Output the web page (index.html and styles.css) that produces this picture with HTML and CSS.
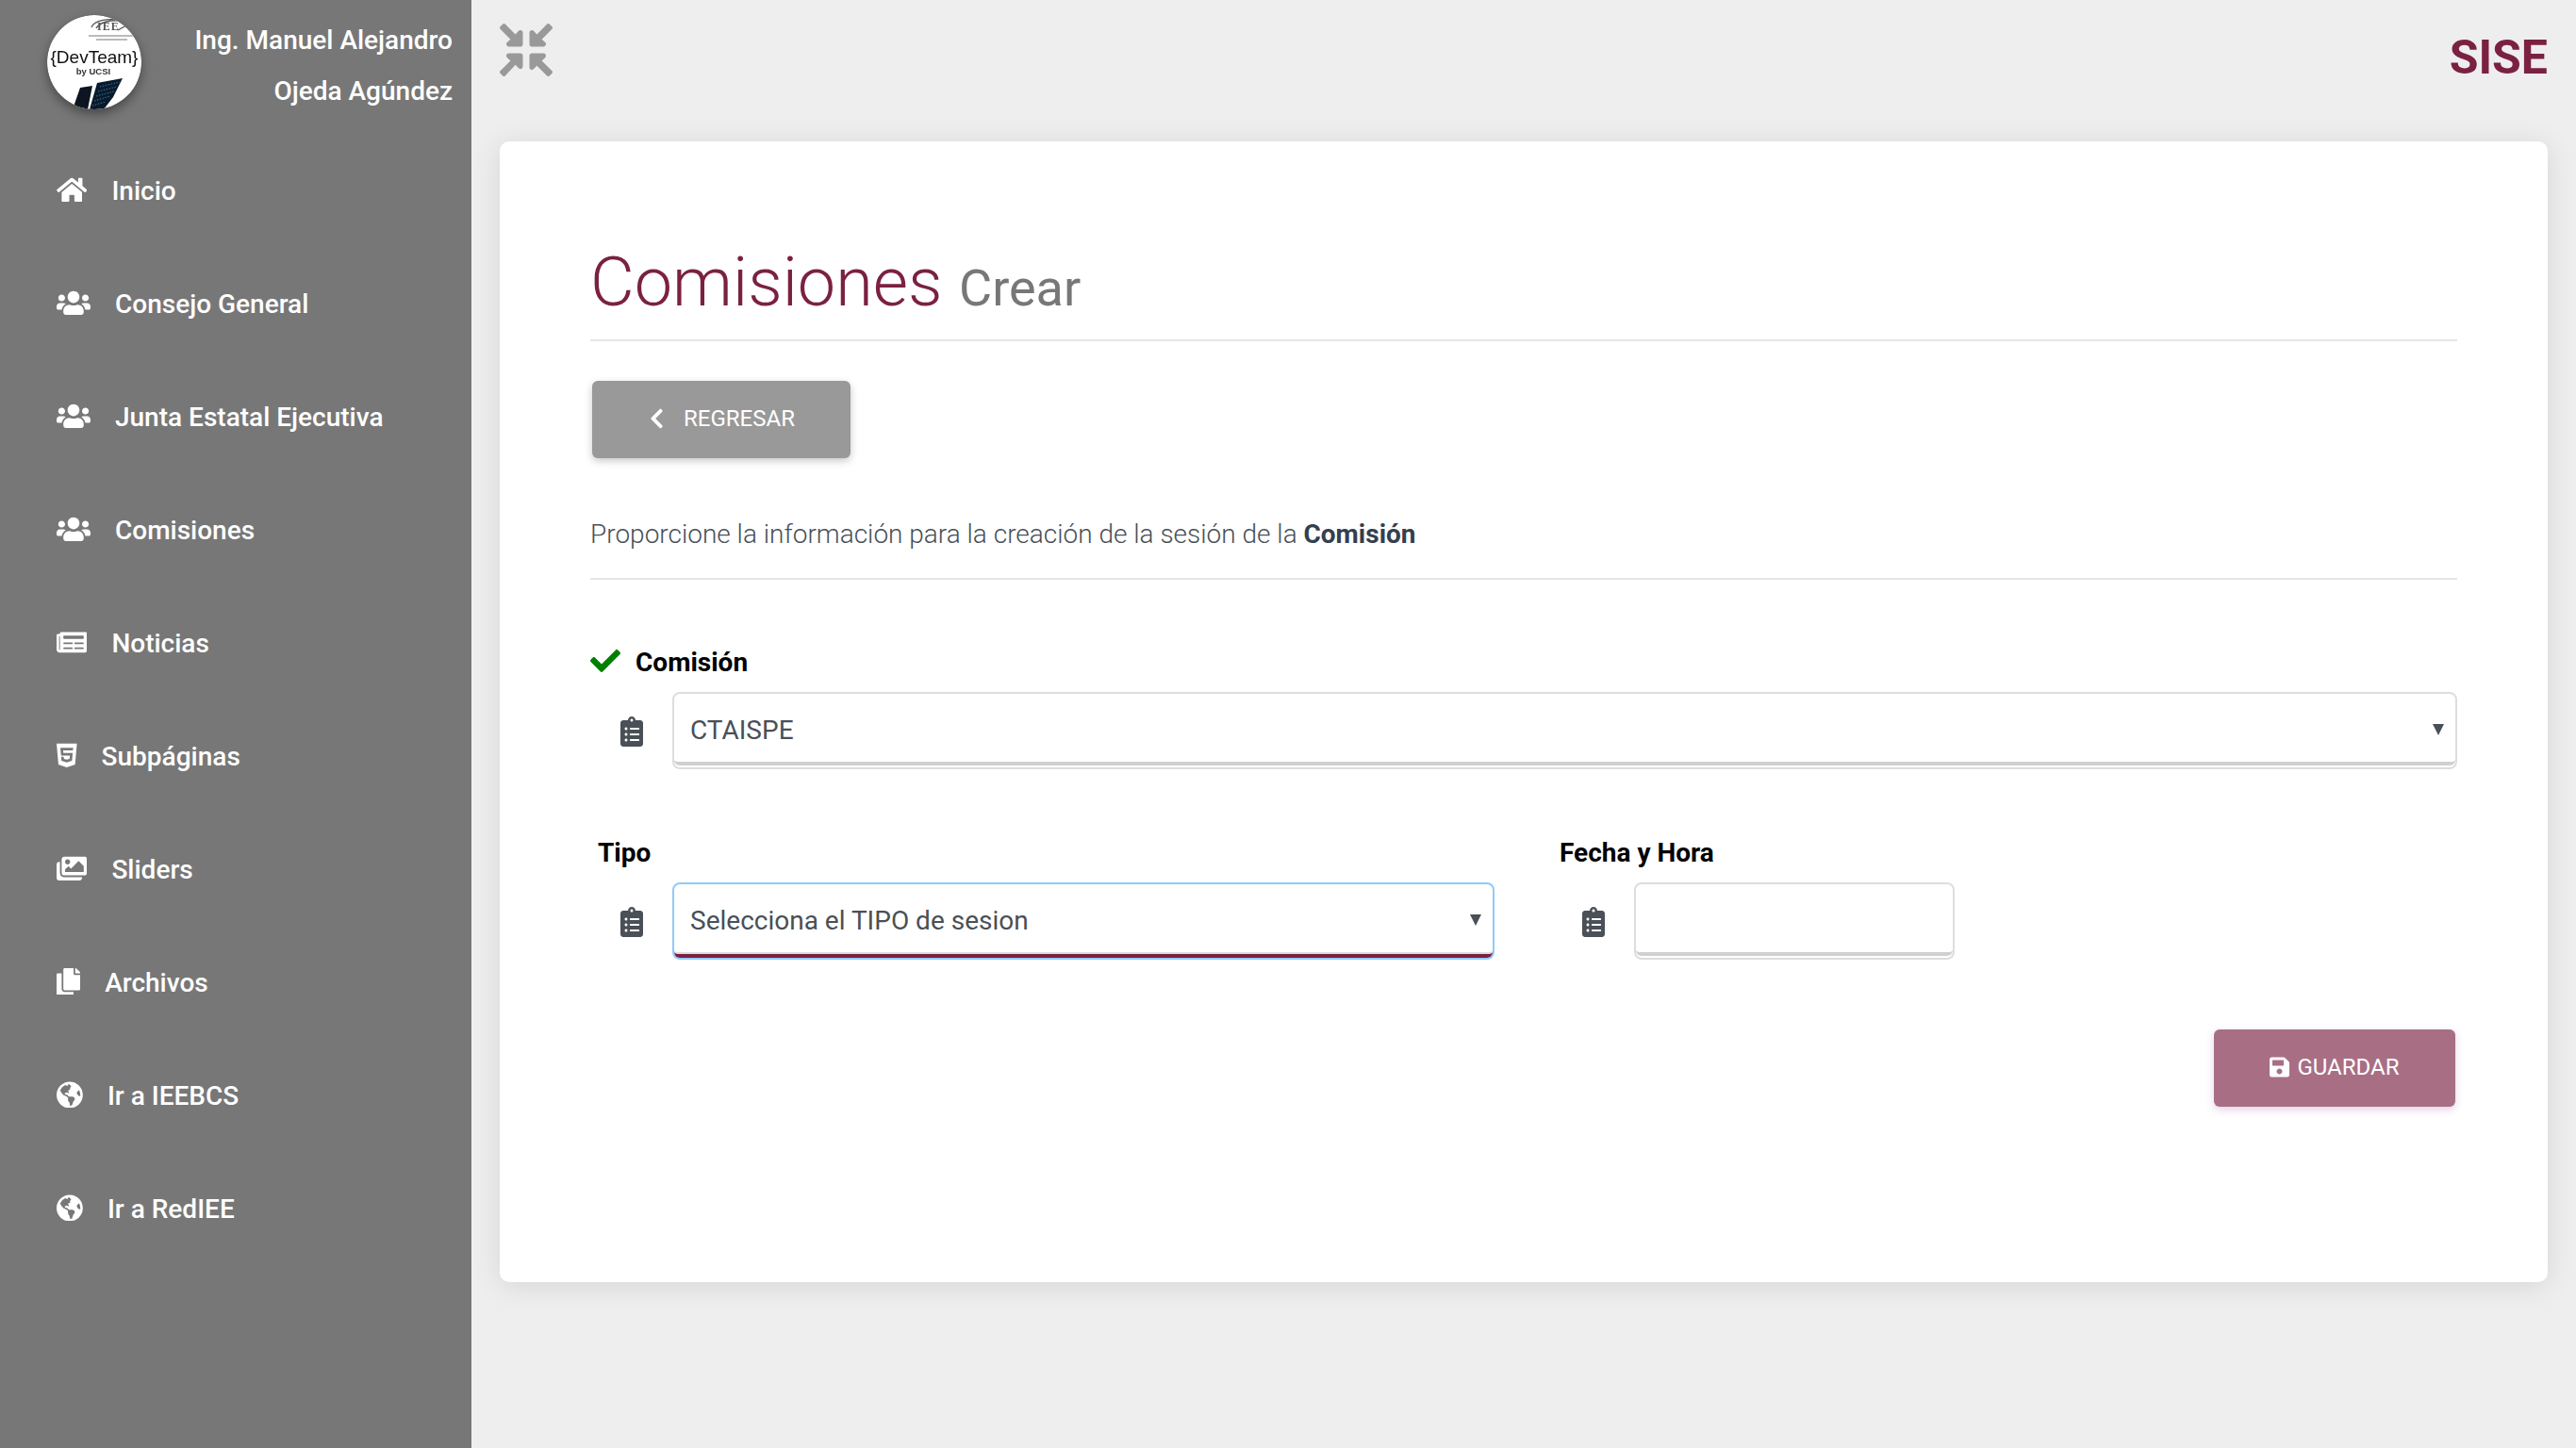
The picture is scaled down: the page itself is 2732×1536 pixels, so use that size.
FILE: index.html
```html
<!DOCTYPE html>
<html lang="es">
<head>
<meta charset="utf-8">
<title>SISE - Comisiones</title>
<link rel="stylesheet" href="styles.css">
</head>
<body>
<svg class="defs" width="0" height="0" aria-hidden="true">
  <symbol id="i-users" viewBox="0 0 640 512"><path d="M96 224c35.3 0 64-28.7 64-64s-28.7-64-64-64-64 28.7-64 64 28.7 64 64 64zm448 0c35.3 0 64-28.7 64-64s-28.7-64-64-64-64 28.7-64 64 28.7 64 64 64zm32 32h-64c-17.6 0-33.5 7.1-45.1 18.6 40.3 22.1 68.9 62 75.1 109.4h66c17.7 0 32-14.3 32-32v-32c0-35.3-28.7-64-64-64zm-256 0c61.9 0 112-50.1 112-112S381.9 32 320 32 208 82.1 208 144s50.1 112 112 112zm76.8 32h-8.3c-20.8 10-43.9 16-68.5 16s-47.6-6-68.5-16h-8.3C179.6 288 128 339.6 128 403.2V432c0 26.5 21.5 48 48 48h288c26.5 0 48-21.5 48-48v-28.8c0-63.6-51.6-115.2-115.2-115.2zm-223.7-13.4C161.5 263.1 145.6 256 128 256H64c-35.3 0-64 28.7-64 64v32c0 17.7 14.3 32 32 32h65.9c6.3-47.4 34.9-87.3 75.2-109.4z"/></symbol>
  <symbol id="i-globe" viewBox="0 0 496 512"><path d="M248 8C111.03 8 0 119.03 0 256s111.03 248 248 248 248-111.03 248-248S384.97 8 248 8zm82.29 357.6c-3.9 3.88-7.99 7.95-11.31 11.28-2.99 3-5.1 6.7-6.17 10.71-1.51 5.66-2.73 11.38-4.77 16.87l-17.39 46.85c-13.76 3-28 4.69-42.65 4.69v-27.38c1.69-12.62-7.64-36.26-22.63-51.25-6-6-9.37-14.14-9.37-22.63v-32.01c0-11.64-6.27-22.34-16.46-27.97-14.37-7.95-34.81-19.06-48.81-26.11-11.48-5.78-22.1-13.14-31.65-21.75l-.8-.72a114.792 114.792 0 0 1-18.06-20.74c-9.38-13.77-24.66-36.42-34.59-51.14 20.47-45.5 57.36-82.04 103.2-101.89l24.01 12.01C203.48 89.74 216 82.01 216 70.11v-11.3c7.99-1.29 16.12-2.11 24.42-2.42l28.3 28.3c6.25 6.25 6.25 16.38 0 22.63L264 112l-10.34 10.34c-3.12 3.12-3.12 8.19 0 11.31l4.69 4.69c3.12 3.12 3.12 8.19 0 11.31l-8 8a8.008 8.008 0 0 1-5.66 2.34h-8.99c-2.08 0-4.08.81-5.58 2.27l-9.92 9.65a8.008 8.008 0 0 0-1.58 9.31l15.59 31.19c2.66 5.32-1.21 11.58-7.15 11.58h-5.64c-1.93 0-3.79-.7-5.24-1.96l-9.28-8.06a16.017 16.017 0 0 0-15.55-3.1l-31.17 10.39a11.95 11.95 0 0 0-8.17 11.34c0 4.53 2.56 8.66 6.61 10.69l11.08 5.54c9.41 4.71 19.79 7.16 30.31 7.16s22.59 27.29 32 32h66.75c8.49 0 16.62 3.37 22.63 9.37l13.69 13.69a30.503 30.503 0 0 1 8.93 21.57 46.536 46.536 0 0 1-13.72 32.98zM417 274.25c-5.79-1.45-10.84-5-14.15-9.97l-17.98-26.97a23.97 23.97 0 0 1 0-26.62l19.59-29.38c2.32-3.47 5.5-6.29 9.24-8.15l12.98-6.49C440.2 193.59 448 223.87 448 256c0 8.67-.74 17.16-1.82 25.54L417 274.25z"/></symbol>
  <symbol id="i-clip" viewBox="0 0 384 512"><path d="M336 64h-80c0-35.3-28.7-64-64-64s-64 28.7-64 64H48C21.5 64 0 85.5 0 112v352c0 26.5 21.5 48 48 48h288c26.5 0 48-21.5 48-48V112c0-26.5-21.5-48-48-48zM96 424c-13.3 0-24-10.7-24-24s10.7-24 24-24 24 10.7 24 24-10.7 24-24 24zm0-96c-13.3 0-24-10.7-24-24s10.7-24 24-24 24 10.7 24 24-10.7 24-24 24zm0-96c-13.3 0-24-10.7-24-24s10.7-24 24-24 24 10.7 24 24-10.7 24-24 24zm96-192c13.3 0 24 10.7 24 24s-10.7 24-24 24-24-10.7-24-24 10.7-24 24-24zm128 368c0 4.4-3.6 8-8 8H168c-4.4 0-8-3.6-8-8v-16c0-4.4 3.6-8 8-8h144c4.4 0 8 3.6 8 8v16zm0-96c0 4.4-3.6 8-8 8H168c-4.4 0-8-3.6-8-8v-16c0-4.4 3.6-8 8-8h144c4.4 0 8 3.6 8 8v16zm0-96c0 4.4-3.6 8-8 8H168c-4.4 0-8-3.6-8-8v-16c0-4.4 3.6-8 8-8h144c4.4 0 8 3.6 8 8v16z"/></symbol>
  <clipPath id="logo-clip"><circle cx="50" cy="50" r="50"/></clipPath>
</svg>

<aside class="sidebar">
  <header class="profile">
    <svg class="logo" viewBox="0 0 100 100" role="img" aria-label="DevTeam by UCSI">
      <g clip-path="url(#logo-clip)">
        <rect width="100" height="100" fill="#fff"/>
        <g class="logo-art">
          <path class="logo-swoosh" d="M47 13 C50 5 66 3 78 6 C68 5 56 7 52 14 M76 6 L84 11 L75 16"/>
          <text class="logo-iee" x="53" y="16">IEE</text>
          <rect class="logo-tiny" x="44" y="21" width="47" height="2"/>
          <rect class="logo-tiny" x="52" y="25" width="33" height="2"/>
          <text class="logo-dev" x="50" y="51">{DevTeam}</text>
          <text class="logo-by" x="49" y="63">by UCSI</text>
          <path class="logo-panel" d="M35 77 L48 75 L43 100 L27 100 Z"/>
          <path class="logo-panel-b" d="M53 72 L80 67 L70 87 L60 100 L45 100 Z"/>
          <path class="logo-dots" d="M56 76 L77 71 M54 81 L74 76 M52 86 L71 81 M50 91 L67 86 M48 96 L62 92"/>
        </g>
      </g>
    </svg>
    <div class="profile-name">Ing. Manuel Alejandro<br>Ojeda Agúndez</div>
  </header>
  <nav class="menu">
    <a class="menu-item"><svg class="menu-icon" viewBox="0 0 576 512"><path d="M280.37 148.26L96 300.11V464a16 16 0 0 0 16 16l112.06-.29a16 16 0 0 0 15.92-16V368a16 16 0 0 1 16-16h64a16 16 0 0 1 16 16v95.64a16 16 0 0 0 16 16.05L464 480a16 16 0 0 0 16-16V300L295.67 148.26a12.19 12.19 0 0 0-15.3 0zM571.6 251.47L488 182.56V44.05a12 12 0 0 0-12-12h-56a12 12 0 0 0-12 12v72.61L318.47 43a48 48 0 0 0-61 0L4.34 251.47a12 12 0 0 0-1.6 16.9l25.5 31A12 12 0 0 0 45.15 301l235.22-193.74a12.19 12.19 0 0 1 15.3 0L530.9 301a12 12 0 0 0 16.9-1.6l25.5-31a12 12 0 0 0-1.7-16.93z"/></svg><span>Inicio</span></a>
    <a class="menu-item"><svg class="menu-icon" viewBox="0 0 640 512"><use href="#i-users"/></svg><span>Consejo General</span></a>
    <a class="menu-item"><svg class="menu-icon" viewBox="0 0 640 512"><use href="#i-users"/></svg><span>Junta Estatal Ejecutiva</span></a>
    <a class="menu-item"><svg class="menu-icon" viewBox="0 0 640 512"><use href="#i-users"/></svg><span>Comisiones</span></a>
    <a class="menu-item"><svg class="menu-icon" viewBox="0 0 576 512"><path d="M552 64H88c-13.255 0-24 10.745-24 24v8H24c-13.255 0-24 10.745-24 24v272c0 30.928 25.072 56 56 56h472c26.51 0 48-21.49 48-48V88c0-13.255-10.745-24-24-24zM56 400a8 8 0 0 1-8-8V144h16v248a8 8 0 0 1-8 8zm236-16H140c-6.627 0-12-5.373-12-12v-8c0-6.627 5.373-12 12-12h152c6.627 0 12 5.373 12 12v8c0 6.627-5.373 12-12 12zm208 0H348c-6.627 0-12-5.373-12-12v-8c0-6.627 5.373-12 12-12h152c6.627 0 12 5.373 12 12v8c0 6.627-5.373 12-12 12zm-208-96H140c-6.627 0-12-5.373-12-12v-8c0-6.627 5.373-12 12-12h152c6.627 0 12 5.373 12 12v8c0 6.627-5.373 12-12 12zm208 0H348c-6.627 0-12-5.373-12-12v-8c0-6.627 5.373-12 12-12h152c6.627 0 12 5.373 12 12v8c0 6.627-5.373 12-12 12zm0-96H140c-6.627 0-12-5.373-12-12v-40c0-6.627 5.373-12 12-12h360c6.627 0 12 5.373 12 12v40c0 6.627-5.373 12-12 12z"/></svg><span>Noticias</span></a>
    <a class="menu-item"><svg class="menu-icon" viewBox="0 0 384 512"><path d="M0 32l34.9 395.8L191.5 480l157.6-52.2L384 32H0zm308.2 127.9H124.4l4.1 49.4h175.6l-13.6 148.4-97.9 27v.3h-1.1l-98.7-27.3-6-75.8h47.7L138 320l53.5 14.5 53.7-14.5 6-62.2H84.3L71.5 112.2h241.1l-4.4 47.7z"/></svg><span>Subpáginas</span></a>
    <a class="menu-item"><svg class="menu-icon" viewBox="0 0 576 512"><path d="M480 416v16c0 26.51-21.49 48-48 48H48c-26.51 0-48-21.49-48-48V176c0-26.51 21.49-48 48-48h16v208c0 44.112 35.888 80 80 80h336zm96-80V80c0-26.51-21.49-48-48-48H144c-26.51 0-48 21.49-48 48v256c0 26.51 21.49 48 48 48h384c26.51 0 48-21.49 48-48zM256 128c0 26.51-21.49 48-48 48s-48-21.49-48-48 21.49-48 48-48 48 21.49 48 48zm-96 144l55.515-55.515c4.686-4.686 12.284-4.686 16.971 0L272 256l135.515-135.515c4.686-4.686 12.284-4.686 16.971 0L512 208v112H160v-48z"/></svg><span>Sliders</span></a>
    <a class="menu-item"><svg class="menu-icon" viewBox="0 0 448 512"><path d="M320 448v40c0 13.255-10.745 24-24 24H24c-13.255 0-24-10.745-24-24V120c0-13.255 10.745-24 24-24h72v296c0 30.879 25.121 56 56 56h168zm0-344V0H152c-13.255 0-24 10.745-24 24v368c0 13.255 10.745 24 24 24h272c13.255 0 24-10.745 24-24V128H344c-13.2 0-24-10.8-24-24zm120.971-31.029L375.029 7.029A24 24 0 0 0 358.059 0H352v96h96v-6.059a24 24 0 0 0-7.029-16.97z"/></svg><span>Archivos</span></a>
    <a class="menu-item"><svg class="menu-icon" viewBox="0 0 496 512"><use href="#i-globe"/></svg><span>Ir a IEEBCS</span></a>
    <a class="menu-item"><svg class="menu-icon" viewBox="0 0 496 512"><use href="#i-globe"/></svg><span>Ir a RedIEE</span></a>
  </nav>
</aside>

<main class="main">
  <div class="topbar">
    <svg class="compress" viewBox="0 0 512 512"><path d="M200 288H88c-21.4 0-32.1 25.8-17 41l32.9 31-99.2 99.3c-6.2 6.2-6.2 16.4 0 22.6l25.4 25.4c6.2 6.2 16.4 6.2 22.6 0L152 400l31 33c15.1 15.1 41 4.4 41-17V312c0-13.3-10.7-24-24-24zm112-64h112c21.4 0 32.1-25.9 17-41l-33-31 99.3-99.3c6.2-6.2 6.2-16.4 0-22.6L481.9 4.7c-6.2-6.2-16.4-6.2-22.6 0L360 104l-31-33C313.9 55.9 288 66.6 288 88v112c0 13.3 10.7 24 24 24zm96 136l33-31c15.1-15.1 4.4-41-17-41H312c-13.3 0-24 10.7-24 24v112c0 21.4 25.9 32.1 41 17l31-33 99.3 99.3c6.2 6.2 16.4 6.2 22.6 0l25.4-25.4c6.2-6.2 6.2-16.4 0-22.6L408 360zM183 71l-31 33L52.7 4.7c-6.2-6.2-16.4-6.2-22.6 0L4.7 30.1c-6.2 6.2-6.2 16.4 0 22.6L104 152l-33 31c-15.1 15.1-4.4 41 17 41h112c13.3 0 24-10.7 24-24V88c0-21.4-25.9-32.1-41-17z"/></svg>
    <div class="brand">SISE</div>
  </div>

  <section class="card">
    <h1 class="title">Comisiones <small>Crear</small></h1>
    <button class="btn btn-back" type="button">
      <svg class="chevron" viewBox="0 0 320 512"><path d="M34.52 239.03L228.87 44.69c9.37-9.37 24.57-9.37 33.94 0l22.67 22.67c9.36 9.36 9.37 24.52.04 33.9L131.49 256l154.02 154.75c9.34 9.38 9.32 24.54-.04 33.9l-22.67 22.67c-9.37 9.37-24.57 9.37-33.94 0L34.52 272.97c-9.37-9.37-9.37-24.57 0-33.94z"/></svg>
      REGRESAR
    </button>
    <p class="lead">Proporcione la información para la creación de la sesión de la <strong>Comisión</strong></p>

    <form class="form">
      <label class="label label-check">
        <svg class="check" viewBox="0 0 512 512"><path d="M173.898 439.404l-166.4-166.4c-9.997-9.997-9.997-26.206 0-36.204l36.203-36.204c9.997-9.998 26.207-9.998 36.204 0L192 312.69 432.095 72.596c9.997-9.997 26.207-9.997 36.204 0l36.203 36.204c9.997 9.997 9.997 26.206 0 36.204l-294.4 294.401c-9.998 9.997-26.207 9.997-36.204-.001z"/></svg>
        Comisión
      </label>
      <div class="input-group">
        <svg class="clip" viewBox="0 0 384 512"><use href="#i-clip"/></svg>
        <div class="field field-select">
          <select class="control"><option>CTAISPE</option></select>
        </div>
      </div>

      <div class="row">
        <div class="col col-tipo">
          <label class="label label-plain">Tipo</label>
          <div class="input-group">
            <svg class="clip" viewBox="0 0 384 512"><use href="#i-clip"/></svg>
            <div class="field field-select is-focus">
              <select class="control"><option>Selecciona el TIPO de sesion</option></select>
            </div>
          </div>
        </div>
        <div class="col col-fecha">
          <label class="label label-plain">Fecha y Hora</label>
          <div class="input-group">
            <svg class="clip" viewBox="0 0 384 512"><use href="#i-clip"/></svg>
            <div class="field">
              <input class="control" type="text">
            </div>
          </div>
        </div>
      </div>

      <div class="actions">
        <button class="btn btn-save" type="button">
          <svg class="save" viewBox="0 0 448 512"><path d="M433.941 129.941l-83.882-83.882A48 48 0 0 0 316.118 32H48C21.49 32 0 53.49 0 80v352c0 26.51 21.49 48 48 48h352c26.51 0 48-21.49 48-48V163.882a48 48 0 0 0-14.059-33.941zM224 416c-35.346 0-64-28.654-64-64 0-35.346 28.654-64 64-64s64 28.654 64 64c0 35.346-28.654 64-64 64zm96-304.52V212c0 6.627-5.373 12-12 12H76c-6.627 0-12-5.373-12-12V108c0-6.627 5.373-12 12-12h228.52c3.183 0 6.235 1.264 8.485 3.515l3.48 3.48A11.996 11.996 0 0 1 320 111.48z"/></svg>
          GUARDAR
        </button>
      </div>
    </form>
  </section>
</main>
</body>
</html>
```

FILE: styles.css
```css
* { box-sizing: border-box; }
html, body { margin: 0; padding: 0; }
body {
  display: flex;
  width: 2732px;
  height: 1536px;
  overflow: hidden;
  background: #eeeeee;
  font-family: Roboto, "Liberation Sans", sans-serif;
  font-size: 28px;
}
.defs { position: absolute; }

/* Sidebar */
.sidebar {
  flex: 0 0 500px;
  background: #777777;
  color: #ffffff;
  font-weight: 500;
}
.profile {
  display: flex;
  justify-content: space-between;
  height: 142px;
  padding: 16px 20px 0 50px;
}
.logo {
  width: 100px;
  height: 100px;
  border-radius: 50%;
  box-shadow: 0 5px 12px rgba(0, 0, 0, 0.4);
}
.logo-art { filter: blur(0.35px); }
.logo-swoosh { fill: none; stroke: #555; stroke-width: 1.4; }
.logo-iee { font: 700 12px "Liberation Serif", serif; fill: #555; letter-spacing: 1px; }
.logo-tiny { fill: #bbb; }
.logo-dev { font: 400 19px "Liberation Sans", sans-serif; fill: #111; text-anchor: middle; }
.logo-by { font: 700 9.5px "Liberation Sans", sans-serif; fill: #333; text-anchor: middle; }
.logo-panel { fill: #0d1620; }
.logo-panel-b { fill: #0a1a2a; }
.logo-dots { fill: none; stroke: #2b6a96; stroke-width: 1.2; stroke-dasharray: 1.5 1.5; }
.profile-name {
  text-align: right;
  line-height: 54px;
  font-size: 28px;
}
.menu { display: flex; flex-direction: column; }
.menu-item {
  display: flex;
  align-items: center;
  gap: 26px;
  height: 120px;
  padding-left: 60px;
  color: #ffffff;
}
.menu-icon {
  height: 28.8px;
  width: auto;
  margin-bottom: 2px;
  fill: #ffffff;
  flex: none;
}

/* Main */
.main {
  flex: 1;
  display: flex;
  flex-direction: column;
  padding: 0 30px;
  min-width: 0;
}
.topbar {
  display: flex;
  justify-content: space-between;
  align-items: flex-start;
  height: 150px;
}
.compress {
  width: 56px;
  height: 56px;
  margin-top: 25px;
  fill: #999999;
}
.brand {
  margin-top: 31px;
  font-size: 50px;
  line-height: 60px;
  font-weight: 700;
  color: #7a2142;
}
.card {
  height: 1210px;
  padding: 107px 96px 0;
  background: #ffffff;
  border-radius: 10px;
  box-shadow: 0 4px 30px rgba(0, 0, 0, 0.1);
}
.title {
  margin: 0;
  padding-bottom: 17px;
  border-bottom: 2px solid #e6e6e6;
  font-size: 72px;
  line-height: 86px;
  font-weight: 300;
  color: #7a2142;
}
.title small {
  font-size: 54px;
  line-height: 1;
  font-weight: 400;
  color: #777777;
}
.btn {
  display: inline-flex;
  align-items: center;
  justify-content: center;
  height: 82px;
  padding: 0 0 2px;
  border: 0;
  border-radius: 6px;
  color: #ffffff;
  font-family: inherit;
  font-size: 24px;
  font-weight: 400;
}
.btn-back {
  display: flex;
  gap: 21px;
  width: 274px;
  margin: 42px 0 0 2px;
  background: #999999;
  box-shadow: 0 3px 8px rgba(0, 0, 0, 0.22);
}
.chevron { width: 15px; height: 24px; margin-left: 2px; fill: #ffffff; }
.lead {
  margin: 59px 0 0;
  padding-bottom: 24px;
  border-bottom: 2px solid #e6e6e6;
  font-size: 28px;
  line-height: 44px;
  font-weight: 300;
  color: #495057;
}
.lead strong { font-weight: 700; color: #343f4f; }

/* Form */
.label {
  display: flex;
  align-items: center;
  font-size: 28px;
  line-height: 40px;
  font-weight: 700;
  color: #000000;
}
.label-check { margin-top: 68px; gap: 16px; }
.label-plain { padding-left: 8px; }
.check { width: 32px; height: 32px; fill: #008000; margin-top: -4px; }
.input-group {
  display: flex;
  align-items: center;
  padding-left: 32px;
  margin-top: 11px;
}
.clip { flex: none; width: 24px; height: 32px; margin-right: 31px; margin-top: 2px; fill: #495057; }
.field {
  position: relative;
  flex: 1;
  height: 82px;
  padding-bottom: 2px;
  border: 2px solid #dddddd;
  border-radius: 8px;
  background: #ffffff;
}
.control {
  display: block;
  width: 100%;
  height: 100%;
  margin: 0;
  padding: 4px 17px 0;
  border: 0;
  border-bottom: 4px solid #d0d0d0;
  border-radius: 0 0 6px 6px;
  outline: 0;
  background: transparent;
  appearance: none;
  font-family: inherit;
  font-size: 28px;
  color: #495057;
}
.field-select::after {
  content: "";
  position: absolute;
  top: 32px;
  right: 12px;
  border-style: solid;
  border-width: 12px 6px 0;
  border-color: #495057 transparent transparent;
}
.is-focus { border-color: #90caf9; padding-bottom: 0; }
.is-focus .control {
  padding-top: 2px;
  border-bottom-color: #7a2142;
  box-shadow: 0 -2px 0 #dddddd inset;
}
.row {
  display: flex;
  gap: 61px;
  margin-top: 69px;
}
.col-tipo { flex: 0 0 959px; }
.col-fecha { flex: 0 0 427px; }
.row .input-group { margin-top: 11px; }
.actions {
  display: flex;
  justify-content: flex-end;
  margin: 74px 2px 0 0;
}
.btn-save {
  gap: 8px;
  width: 256px;
  background: #a86f84;
  box-shadow: 0 3px 8px rgba(170, 100, 180, 0.3);
}
.save { width: 21px; height: 24px; fill: #ffffff; }
```
